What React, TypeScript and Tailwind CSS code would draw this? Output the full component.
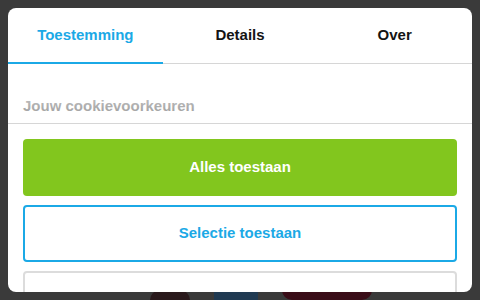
import React, { useState } from "react"

const tabs = ["Toestemming", "Details", "Over"]

function ConsentDialog() {
  const [active, setActive] = useState(0)

  return (
    <div className="absolute left-2 top-2 w-[464px] h-[284px] bg-white rounded-lg overflow-hidden flex flex-col">
      <div className="flex h-[56px] border-b border-[#d6d6d6] shrink-0">
        {tabs.map((tab, i) => (
          <button
            key={tab}
            onClick={() => setActive(i)}
            className={
              i === active
                ? "flex-1 flex items-center justify-center text-[15px] font-bold text-[#1ba9e6] border-b-2 border-[#1ba9e6] -mb-px pt-px"
                : "flex-1 flex items-center justify-center text-[15px] font-bold text-[#141414]"
            }
          >
            {tab}
          </button>
        ))}
      </div>
      <div className="relative h-[60px] border-b border-[#d6d6d6] shrink-0 flex items-end px-[15px] pb-[6px]">
        <span className="text-[15px] font-bold text-[#8f8f8f]">Jouw cookievoorkeuren</span>
        <div className="absolute inset-0 bg-gradient-to-b from-white via-white/50 to-white/0" />
      </div>
      <div className="flex flex-col gap-[9px] px-[15px] pt-[15px]">
        <button className="h-[57px] rounded bg-[#82c61e] text-white text-[15px] font-bold">
          Alles toestaan
        </button>
        <button className="h-[57px] rounded border-2 border-[#1ba9e6] text-[#1ba9e6] text-[15px] font-bold">
          Selectie toestaan
        </button>
        <button className="h-[57px] rounded border-2 border-[#dcdcdc]" />
      </div>
    </div>
  )
}

export default function App() {
  return (
    <div
      className="relative w-[480px] h-[300px] bg-[#3a3a3a] overflow-hidden"
      style={{ fontFamily: '"Liberation Sans", Arial, sans-serif' }}
    >
      <div className="flex items-end h-full gap-6 pl-[150px]">
        <div className="w-[40px] h-[10px] bg-[#2a1a1c] rounded-t-full" />
        <div className="w-[44px] h-[10px] bg-[#203a52]" />
        <div className="w-[90px] h-[10px] bg-[#3a0d18] rounded-b-full" />
      </div>
      <ConsentDialog />
    </div>
  )
}
